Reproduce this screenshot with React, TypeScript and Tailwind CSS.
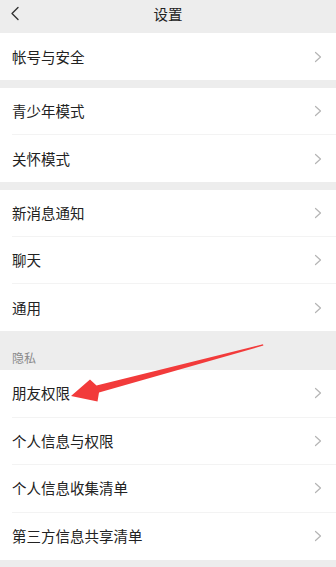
import React from 'react';

type Group = { title?: string; items: string[]; rowH: string };

const groups: Group[] = [
  { items: ['帐号与安全'], rowH: 'h-[47px]' },
  { items: ['青少年模式', '关怀模式'], rowH: 'h-[47px]' },
  { items: ['新消息通知', '聊天', '通用'], rowH: 'h-[47px]' },
  { title: '隐私', items: ['朋友权限', '个人信息与权限', '个人信息收集清单', '第三方信息共享清单'], rowH: 'h-[47.5px]' },
];

function ChevronRight() {
  return (
    <svg width="8" height="12" viewBox="0 0 8 12" fill="none">
      <path d="M1.5 1.5 L6.5 6 L1.5 10.5" stroke="#b5b5b5" strokeWidth="1.2" strokeLinecap="round" strokeLinejoin="round" />
    </svg>
  );
}

function Row({ label, last, h }: { label: string; last: boolean; h: string }) {
  return (
    <div className={`flex bg-white pl-3 ${h}`}>
      <div className={`flex flex-1 items-center justify-between pr-[14px] ${last ? '' : 'border-b border-[#f3f3f3]'}`}>
        <span className="text-[14.5px] text-[#222]">{label}</span>
        <ChevronRight />
      </div>
    </div>
  );
}

function Arrow() {
  return (
    <svg className="absolute left-0 top-0 pointer-events-none" width="336" height="567" viewBox="0 0 336 567">
      <polygon
        points="71,396 90,379.5 96.5,385.5 263,344.3 263.4,345.6 99,392.5 97.5,401.5"
        fill="#f23b3b"
      />
    </svg>
  );
}

export default function App() {
  return (
    <div
      className="relative w-[336px] h-[567px] overflow-hidden bg-[#ededed]"
      style={{ fontFamily: '"Noto Sans CJK SC", "Noto Sans", sans-serif' }}
    >
      <header className="relative flex h-[33px] items-center justify-center">
        <svg className="absolute left-[10px] top-[6px]" width="10" height="15" viewBox="0 0 10 15" fill="none">
          <path d="M8 1.5 L2 7.5 L8 13.5" stroke="#333" strokeWidth="1.4" strokeLinecap="round" strokeLinejoin="round" />
        </svg>
        <h1 className="text-[14.5px] text-[#222] -mt-[5px]">设置</h1>
      </header>

      {groups.map((g, gi) => (
        <div key={gi}>
          {g.title ? (
            <div className="flex h-[39px] items-end pl-3 pb-[3px] text-[12px] text-[#8a8a8a]">{g.title}</div>
          ) : gi > 0 ? (
            <div className="h-2" />
          ) : null}
          {g.items.map((it, i) => (
            <Row key={it} label={it} last={i === g.items.length - 1} h={g.rowH} />
          ))}
        </div>
      ))}

      <Arrow />
    </div>
  );
}
